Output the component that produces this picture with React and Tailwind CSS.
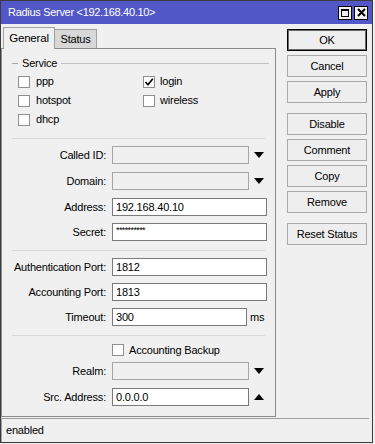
import React from 'react';

const Check = ({ checked }) => (
  <span className="w-[12px] h-[12px] border border-[#8f8f8f] bg-white flex items-center justify-center shrink-0">
    {checked && (
      <svg width="10" height="10" viewBox="0 0 10 10">
        <path d="M1.5 5 L4 7.8 L8.8 1.8" fill="none" stroke="#000" strokeWidth="1.7" />
      </svg>
    )}
  </span>
);

const Tri = ({ up }) => (
  <svg width="10" height="6" viewBox="0 0 10 6" className="ml-[5px] shrink-0">
    <path d={up ? 'M0 6 L5 0 L10 6 Z' : 'M0 0 L10 0 L5 6 Z'} fill="#000" />
  </svg>
);

const Field = ({ label, value, w, disabled, tri, up, suffix, mt }) => (
  <div className={`flex items-center h-[18px] ${mt}`}>
    <div className="w-[104px] text-right">{label}</div>
    <div
      className={`ml-[6px] h-[18px] flex items-center pl-[3px] border ${
        disabled ? 'bg-[#f0f0f0] border-[#a6a6a6]' : 'bg-white border-[#7a7a7a]'
      } ${w}`}
    >
      {value}
    </div>
    {tri && <Tri up={up} />}
    {suffix && <span className="ml-[3px]">{suffix}</span>}
  </div>
);

const Sep = ({ mt }) => <div className={`mx-[10px] h-px bg-[#d9d9d9] ${mt}`} />;

const Btn = ({ children, primary, mt = 'mt-[4px]' }) => (
  <div
    className={`h-[22px] w-[80px] flex items-center justify-center bg-[#eeeeee] border ${
      primary ? 'border-black shadow-[inset_0_0_0_1px_#6a6a6a]' : 'border-[#a9a9a9]'
    } ${mt}`}
  >
    {children}
  </div>
);

export default function App() {
  return (
    <div className="w-[375px] h-[444px] bg-[#f0f0f0] font-['Liberation_Sans',Arial,sans-serif] text-[11px] tracking-[-0.2px] text-black">
      <div className="w-[373px] h-[443px] border border-[#3c3c3c] flex flex-col bg-[#f0f0f0]">
        {/* title bar */}
        <div className="h-[23px] bg-[#5157c7] flex items-center pl-[7px] pr-[4px] text-white">
          <span className="flex-1 text-[11px] tracking-[-0.3px]">Radius Server &lt;192.168.40.10&gt;</span>
          <div className="flex gap-[2px]">
            <span className="w-[14px] h-[14px] bg-[#f2f2f2] border border-black flex items-center justify-center">
              <span className="w-[8px] h-[8px] border border-black border-t-2" />
            </span>
            <span className="w-[14px] h-[14px] bg-[#f2f2f2] border border-black flex items-center justify-center">
              <svg width="9" height="9" viewBox="0 0 9 9">
                <path d="M1 1 L8 8 M8 1 L1 8" stroke="#000" strokeWidth="2" />
              </svg>
            </span>
          </div>
        </div>

        <div className="flex flex-1">
          {/* left tabs + panel */}
          <div className="w-[275px] flex flex-col">
            <div className="flex items-end h-[24px] pl-[2px]">
              <div className="h-[22px] w-[52px] flex items-center justify-center bg-[#f0f0f0] border border-b-0 border-[#a0a0a0] text-[11.5px] relative top-px">
                General
              </div>
              <div className="h-[19px] w-[42px] flex items-center justify-center bg-[#d8d8d8] border border-l-0 border-b-0 border-[#a0a0a0]">
                Status
              </div>
            </div>
            <div className="h-[369px] border border-[#8c8c8c] flex flex-col">
              {/* Service group */}
              <div className="flex items-center mt-[8px] h-[12px]">
                <span className="ml-[10px] w-[6px] h-px bg-[#a8a8a8]" />
                <span className="mx-[4px]">Service</span>
                <span className="flex-1 mr-[6px] h-px bg-[#c0c0c0]" />
              </div>
              <div className="grid grid-cols-[125px_1fr] mt-[3px] pl-[16px]">
                {[
                  ['ppp', false, 'login', true],
                  ['hotspot', false, 'wireless', false],
                  ['dhcp', false, null, false],
                ].map(([a, ac, b, bc]) => (
                  <React.Fragment key={a}>
                    <div className="h-[19px] flex items-center gap-[6px]">
                      <Check checked={ac} />
                      <span>{a}</span>
                    </div>
                    <div className="h-[19px] flex items-center gap-[5px]">
                      {b && (
                        <>
                          <Check checked={bc} />
                          <span>{b}</span>
                        </>
                      )}
                    </div>
                  </React.Fragment>
                ))}
              </div>
              <Sep mt="mt-[9px]" />
              <Field label="Called ID:" w="w-[137px]" disabled tri mt="mt-[7px]" />
              <Field label="Domain:" w="w-[137px]" disabled tri mt="mt-[8px]" />
              <Field label="Address:" value="192.168.40.10" w="w-[155px]" mt="mt-[8px]" />
              <Field
                label="Secret:"
                value={<span className="text-[9px] tracking-[-0.6px] relative -top-px">**********</span>}
                w="w-[155px]"
                mt="mt-[7px]"
              />
              <Sep mt="mt-[9px]" />
              <Field label="Authentication Port:" value="1812" w="w-[155px]" mt="mt-[7px]" />
              <Field label="Accounting Port:" value="1813" w="w-[155px]" mt="mt-[7px]" />
              <Field label="Timeout:" value="300" w="w-[135px]" suffix="ms" mt="mt-[7px]" />
              <Sep mt="mt-[9px]" />
              <div className="flex items-center h-[14px] mt-[7px] pl-[110px] gap-[5px]">
                <Check />
                <span>Accounting Backup</span>
              </div>
              <Field label="Realm:" w="w-[137px]" disabled tri mt="mt-[5px]" />
              <Field label="Src. Address:" value="0.0.0.0" w="w-[137px]" tri up mt="mt-[8px]" />
            </div>
          </div>

          {/* right buttons */}
          <div className="ml-[11px] flex flex-col pt-[5px]">
            <Btn primary mt="mt-0">OK</Btn>
            <Btn>Cancel</Btn>
            <Btn>Apply</Btn>
            <Btn mt="mt-[10px]">Disable</Btn>
            <Btn>Comment</Btn>
            <Btn>Copy</Btn>
            <Btn>Remove</Btn>
            <Btn mt="mt-[10px]">Reset Status</Btn>
          </div>
        </div>

        {/* status bar */}
        <div className="h-[24px] mt-[1px] mr-[3px] border-t border-l border-[#a0a0a0] flex items-center pl-[4px]">
          enabled
        </div>
      </div>
    </div>
  );
}
